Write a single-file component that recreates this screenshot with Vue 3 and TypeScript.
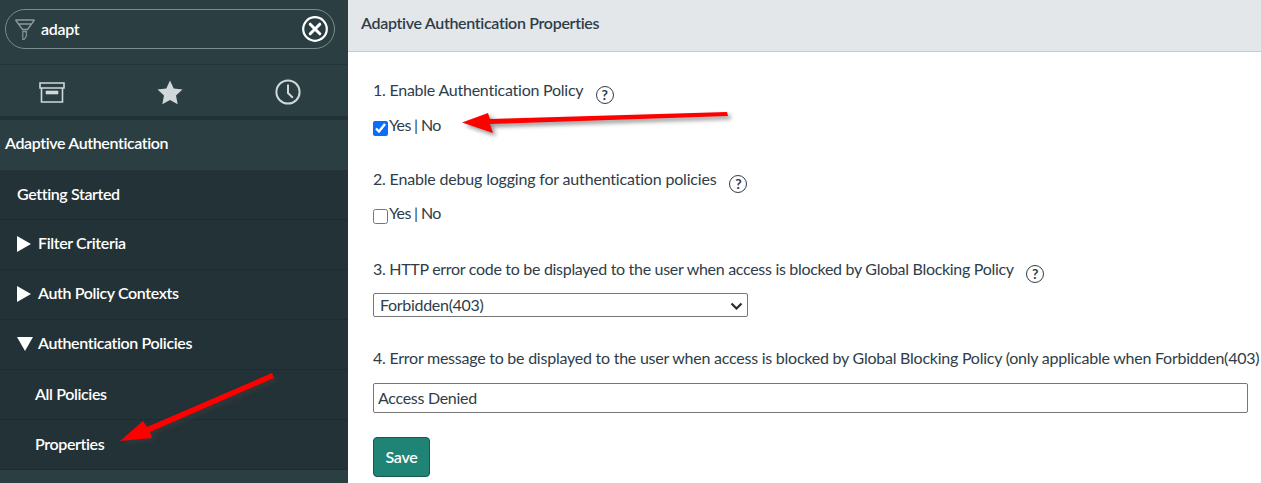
<script setup lang="ts">
const navItems = [
  { label: 'Getting Started', kind: 'top', arrow: '' },
  { label: 'Filter Criteria', kind: 'top', arrow: 'right' },
  { label: 'Auth Policy Contexts', kind: 'top', arrow: 'right' },
  { label: 'Authentication Policies', kind: 'top', arrow: 'down' },
  { label: 'All Policies', kind: 'sub', arrow: '' },
  { label: 'Properties', kind: 'sub', arrow: '' },
]
</script>

<template>
  <div class="page">
    <aside class="sidebar">
      <div class="search-wrap">
        <div class="search">
          <svg class="funnel" width="20" height="21" viewBox="0 0 20 21">
            <path d="M.5 1h19M.5 1l7 9.500h5l7-9.500M3.500 5h13" fill="none" stroke="#8d999c" stroke-width="1.300" />
            <path d="M7.800 12.500h3.600v4.500L9 20.500H7.800z" fill="none" stroke="#7f9099" stroke-width="1.300" />
          </svg>
          <span class="search-text">adapt</span>
          <svg class="clear" width="28" height="28" viewBox="0 0 28 28">
            <circle cx="14" cy="14" r="11.800" fill="none" stroke="#fff" stroke-width="2.200" />
            <path d="M9.200 9.200l9.600 9.600M18.800 9.200l-9.600 9.600" stroke="#fff" stroke-width="3" stroke-linecap="round" />
          </svg>
        </div>
      </div>
      <div class="tabs">
        <svg width="26" height="21" viewBox="0 0 26 21" fill="none" stroke="#d2d8da" stroke-width="1.600">
          <path d="M1 1h24v5H1zM2.500 6v14h21V6" />
          <path d="M7 9h12v3H7z" fill="#d2d8da" stroke-width="0.600" />
        </svg>
        <svg width="26" height="25" viewBox="0 0 26 25">
          <path d="M13 .5l3.700 8 8.800 1-6.500 6 1.700 8.800L13 19.900 5.300 24.300 7 15.500l-6.500-6 8.800-1z" fill="#d2d8da" />
        </svg>
        <svg width="26" height="26" viewBox="0 0 26 26" fill="none" stroke="#d2d8da">
          <circle cx="13" cy="13" r="11.600" stroke-width="2" />
          <path d="M13 5.500V14l4.800 4.800" stroke-width="2" />
        </svg>
      </div>
      <div class="section-title">Adaptive Authentication</div>
      <ul class="nav">
        <li v-for="item in navItems" :key="item.label" class="nav-item" :class="item.kind">
          <span v-if="item.arrow" class="caret" :class="item.arrow"></span>
          <span>{{ item.label }}</span>
        </li>
      </ul>
    </aside>

    <main class="main">
      <header class="header">Adaptive Authentication Properties</header>
      <div class="content">
        <section class="field f1">
          <div class="label">1. Enable Authentication Policy
            <span class="help">?</span>
          </div>
          <div class="choice">
            <input type="checkbox" checked />
            <span>Yes | No</span>
          </div>
        </section>
        <section class="field f2">
          <div class="label">2. Enable debug logging for authentication policies
            <span class="help">?</span>
          </div>
          <div class="choice">
            <input type="checkbox" />
            <span>Yes | No</span>
          </div>
        </section>
        <section class="field f3">
          <div class="label">3. HTTP error code to be displayed to the user when access is blocked by Global Blocking Policy
            <span class="help">?</span>
          </div>
          <div class="select-wrap">
            <select class="select">
              <option>Forbidden(403)</option>
            </select>
            <svg class="chevron" width="13" height="8" viewBox="0 0 13 8">
              <path d="M1.500 1.500l5 5 5-5" fill="none" stroke="#2b2b2b" stroke-width="2.200" />
            </svg>
          </div>
        </section>
        <section class="field f4">
          <div class="label long">4. Error message to be displayed to the user when access is blocked by Global Blocking Policy (only applicable when Forbidden(403)</div>
          <input class="text-input" type="text" value="Access Denied" />
        </section>
        <button class="save" type="button">Save</button>
      </div>
    </main>

    <svg class="annotations" width="1261" height="483" viewBox="0 0 1261 483">
      <g class="arrow">
        <path d="M462 122.500L488 113 490 119 727 112 728 116 490 124 493 133z" fill="#f00" />
        <path d="M120 441L143 421 147 427 272 373 274 378 150 432 152 438z" fill="#f00" />
      </g>
    </svg>
  </div>
</template>

<style>
html, body { margin: 0; padding: 0; background: #fff; }
</style>

<style scoped>
.page {
  position: relative;
  display: flex;
  width: 1261px;
  height: 483px;
  overflow: hidden;
  font-family: Lato, "Open Sans", sans-serif;
}
.sidebar {
  width: 348px;
  flex: none;
  background: #2b3e42;
  color: #fff;
}
.search-wrap {
  height: 65px;
  padding: 9px 13px 0 5px;
  box-sizing: border-box;
  border-bottom: 1px solid #253538;
}
.search {
  height: 40px;
  box-sizing: border-box;
  border: 1px solid #7e8b8e;
  border-radius: 20px;
  display: flex;
  align-items: center;
  padding: 0 5px 0 9px;
}
.funnel { flex: none; }
.search-text {
  flex: 1;
  margin-left: 6px;
  margin-top: -2px;
  font-size: 16px;
  font-weight: 600;
  letter-spacing: -0.3px;
}
.tabs {
  height: 51px;
  display: flex;
  align-items: center;
  justify-content: space-between;
  padding: 3px 47px 0 39px;
  box-sizing: border-box;
}
.section-title {
  height: 54px;
  box-sizing: border-box;
  border-top: 4px solid #233236;
  padding: 13px 0 0 5px;
  font-size: 16px;
  line-height: 20px;
  font-weight: 600;
  letter-spacing: -0.38px;
}
.nav {
  list-style: none;
  margin: 0;
  padding: 0;
  background: #233236;
}
.nav-item {
  height: 50px;
  box-sizing: border-box;
  border-bottom: 1px solid #1f2c2f;
  display: flex;
  align-items: center;
  font-size: 16px;
  font-weight: 600;
  letter-spacing: -0.38px;
  padding-left: 17px;
  padding-bottom: 2px;
}
.nav-item.sub { padding-left: 35px; }
.caret {
  width: 0;
  height: 0;
  margin-right: 7px;
  flex: none;
}
.caret + span { margin-top: -2px; }
.caret.right {
  border-top: 8px solid transparent;
  border-bottom: 8px solid transparent;
  border-left: 14px solid #fff;
}
.caret.down {
  border-left: 8px solid transparent;
  border-right: 8px solid transparent;
  border-top: 14px solid #fff;
  margin-right: 5px;
}
.main {
  flex: 1;
  min-width: 0;
}
.header {
  height: 52px;
  box-sizing: border-box;
  background: #e4e7ea;
  border-bottom: 1px solid #c9cccf;
  padding: 13px 0 0 13px;
  font-size: 16px;
  line-height: 20px;
  font-weight: 600;
  letter-spacing: -0.32px;
  color: #2e3d49;
}
.content {
  padding: 28px 0 0 25px;
  color: #2e3d49;
  font-size: 16px;
  letter-spacing: -0.3px;
}
.label {
  line-height: 20px;
  height: 20px;
}
.f1 .label { letter-spacing: -0.24px; }
.f2 .label { letter-spacing: -0.18px; }
.long {
  white-space: nowrap;
  letter-spacing: -0.24px;
}
.help {
  display: inline-flex;
  align-items: center;
  justify-content: center;
  width: 18px;
  height: 18px;
  box-sizing: border-box;
  border: 1.300px solid #2e3d49;
  border-radius: 50%;
  margin-left: 9px;
  font-size: 14px;
  font-weight: 700;
  line-height: 1;
  letter-spacing: 0;
  vertical-align: -4px;
}
.choice {
  display: flex;
  align-items: flex-start;
  margin-top: 14px;
  height: 20px;
  line-height: 20px;
  letter-spacing: -0.65px;
}
.f1 .choice { margin-top: 15px; }
.choice input {
  width: 15px;
  height: 15px;
  margin: 6px 1px 0 0;
  accent-color: #0b6ef8;
}
.f1 { height: 89px; }
.f2 { height: 90px; }
.f3 { height: 89px; }
.select-wrap {
  position: relative;
  width: 375px;
  margin-top: 14px;
}
.select {
  display: block;
  width: 375px;
  height: 24px;
  padding: 0 0 2px 6px;
  box-sizing: border-box;
  appearance: none;
  background: #fff;
  border: 1px solid #767676;
  border-radius: 2px;
  font: inherit;
  letter-spacing: -0.3px;
  color: #2e3d49;
}
.chevron {
  position: absolute;
  right: 5px;
  top: 9px;
  pointer-events: none;
}
.f4 { height: 89px; }
.text-input {
  display: block;
  width: 875px;
  height: 30px;
  margin-top: 15px;
  padding: 0 4px 2px;
  box-sizing: border-box;
  border: 1px solid #767676;
  border-radius: 2px;
  font: inherit;
  letter-spacing: -0.3px;
  color: #2e3d49;
}
.save {
  display: block;
  width: 57px;
  height: 40px;
  padding: 0 0 2px;
  background: #1f8476;
  border: 1px solid #17574e;
  border-radius: 4px;
  color: #fff;
  font: inherit;
  font-weight: 600;
  letter-spacing: -0.3px;
}
.annotations {
  position: absolute;
  left: 0;
  top: 0;
  pointer-events: none;
}
.arrow { filter: drop-shadow(3px 3px 2px rgba(60, 60, 60, 0.55)); }
</style>
